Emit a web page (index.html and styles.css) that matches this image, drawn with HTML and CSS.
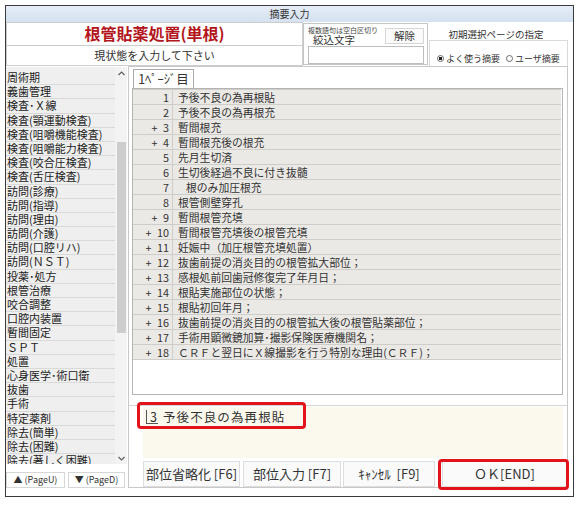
FILE: index.html
```html
<!DOCTYPE html>
<html lang="ja">
<head>
<meta charset="utf-8">
<title>摘要入力</title>
<link rel="stylesheet" href="styles.css">
</head>
<body>
<div class="win">
  <div class="titlebar">摘要入力</div>
  <div class="header">
    <div class="hleft">
      <div class="title">根管貼薬処置(単根)</div>
      <div class="subtitle">現状態を入力して下さい</div>
    </div>
    <div class="filter">
      <div class="frow">
        <div class="flabels">
          <div class="hint">複数語句は空白区切り</div>
          <div class="flabel">絞込文字</div>
        </div>
        <div class="clear">解除</div>
      </div>
      <div class="finput"></div>
    </div>
    <div class="pagesel">
      <div class="ps-title">初期選択ページの指定</div>
      <div class="ps-group">
        <span class="radio on"></span><span class="rlabel">よく使う摘要</span>
        <span class="radio second"></span><span class="rlabel">ユーザ摘要</span>
      </div>
    </div>
  </div>
  <div class="content">
    <div class="side">
      <div class="listbox">
        <div class="list">
          <div class="item">周術期</div>
          <div class="item">義歯管理</div>
          <div class="item">検査･Ｘ線</div>
          <div class="item">検査(顎運動検査)</div>
          <div class="item">検査(咀嚼機能検査)</div>
          <div class="item">検査(咀嚼能力検査)</div>
          <div class="item">検査(咬合圧検査)</div>
          <div class="item">検査(舌圧検査)</div>
          <div class="item">訪問(診療)</div>
          <div class="item">訪問(指導)</div>
          <div class="item">訪問(理由)</div>
          <div class="item">訪問(介護)</div>
          <div class="item">訪問(口腔リハ)</div>
          <div class="item">訪問(ＮＳＴ)</div>
          <div class="item">投薬･処方</div>
          <div class="item">根管治療</div>
          <div class="item">咬合調整</div>
          <div class="item">口腔内装置</div>
          <div class="item">暫間固定</div>
          <div class="item">ＳＰＴ</div>
          <div class="item">処置</div>
          <div class="item">心身医学･術口衛</div>
          <div class="item">抜歯</div>
          <div class="item">手術</div>
          <div class="item">特定薬剤</div>
          <div class="item">除去(簡単)</div>
          <div class="item">除去(困難)</div>
          <div class="item">除去(著しく困難)</div>
        </div>
        <div class="scroll">
          <div class="arrow"><svg width="7" height="5" viewBox="0 0 7 5"><polyline points="0.5,4 3.5,1 6.5,4" fill="none" stroke="#606060" stroke-width="1.2"/></svg></div>
          <div class="thumb"></div>
          <div class="spacer"></div>
          <div class="arrow"><svg width="7" height="5" viewBox="0 0 7 5"><polyline points="0.5,1 3.5,4 6.5,1" fill="none" stroke="#606060" stroke-width="1.2"/></svg></div>
        </div>
      </div>
      <div class="pagebtns">
        <div class="pbtn pbtn-up">▲ (PageU)</div>
        <div class="pbtn pbtn-down">▼ (PageD)</div>
      </div>
    </div>
    <div class="main">
      <div class="tabs"><div class="tab">1ﾍﾟｰｼﾞ目</div></div>
      <div class="tabpage">
        <div class="grid">
          <div class="row"><div class="num">1</div><div class="txt">予後不良の為再根貼</div></div>
          <div class="row"><div class="num">2</div><div class="txt">予後不良の為再根充</div></div>
          <div class="row"><div class="num">+ 3</div><div class="txt">暫間根充</div></div>
          <div class="row"><div class="num">+ 4</div><div class="txt">暫間根充後の根充</div></div>
          <div class="row"><div class="num">5</div><div class="txt">先月生切済</div></div>
          <div class="row"><div class="num">6</div><div class="txt">生切後経過不良に付き抜髄</div></div>
          <div class="row"><div class="num">7</div><div class="txt indent">根のみ加圧根充</div></div>
          <div class="row"><div class="num">8</div><div class="txt">根管側壁穿孔</div></div>
          <div class="row"><div class="num">+ 9</div><div class="txt">暫間根管充填</div></div>
          <div class="row"><div class="num">+ 10</div><div class="txt">暫間根管充填後の根管充填</div></div>
          <div class="row"><div class="num">+ 11</div><div class="txt">妊娠中（加圧根管充填処置）</div></div>
          <div class="row"><div class="num">+ 12</div><div class="txt">抜歯前提の消炎目的の根管拡大部位；</div></div>
          <div class="row"><div class="num">+ 13</div><div class="txt">感根処前回歯冠修復完了年月日；</div></div>
          <div class="row"><div class="num">+ 14</div><div class="txt">根貼実施部位の状態；</div></div>
          <div class="row"><div class="num">+ 15</div><div class="txt">根貼初回年月；</div></div>
          <div class="row"><div class="num">+ 16</div><div class="txt">抜歯前提の消炎目的の根管拡大後の根管貼薬部位；</div></div>
          <div class="row"><div class="num">+ 17</div><div class="txt">手術用顕微鏡加算･撮影保険医療機関名；</div></div>
          <div class="row"><div class="num">+ 18</div><div class="txt">ＣＲＦと翌日にＸ線撮影を行う特別な理由(ＣＲＦ)；</div></div>
        </div>
      </div>
      <div class="sep"></div>
      <div class="memo">
        <div class="memo-text"><span class="caret">3</span><span class="memo-body">予後不良の為再根貼</span></div>
      </div>
      <div class="btns">
        <div class="btn btn-f6">部位省略化 [F6]</div>
        <div class="btn btn-f7">部位入力 [F7]</div>
        <div class="btn btn-f9">ｷｬﾝｾﾙ  [F9]</div>
        <div class="btn btn-ok">ＯＫ[END]</div>
      </div>
      <div class="hl hl-memo"></div>
      <div class="hl hl-ok"></div>
    </div>
  </div>
</div>
</body>
</html>
```

FILE: styles.css
```css
* { box-sizing: border-box; }
html, body { margin: 0; padding: 0; background: #fff; }
body {
  font-family: "Noto Sans CJK JP", "Noto Sans", sans-serif;
  color: #2b2b2b;
}
.win {
  margin: 5px 0 0 5px;
  width: 569px;
  height: 492px;
  border: 1px solid #3a3a3a;
  display: flex;
  flex-direction: column;
  background: #fff;
}
.titlebar {
  flex: none;
  height: 16px;
  line-height: 16px;
  font-size: 10px;
  text-align: center;
  color: #333;
  background: linear-gradient(#e5edf8, #d5e1f0);
}
.header { flex: none; height: 44px; display: flex; }
.hleft { width: 297px; display: flex; flex-direction: column; }
.title {
  height: 24px;
  border: 1px solid #cdcdcd;
  text-align: center;
  font-size: 16px;
  font-weight: bold;
  color: #b3161c;
  line-height: 20px;
}
.subtitle {
  height: 20px;
  border: 1px solid #cdcdcd;
  border-top: none;
  text-align: center;
  font-size: 11px;
  line-height: 19px;
  color: #333;
}
.filter {
  width: 125px;
  margin: 1px 0;
  border: 1px solid #c6c6c6;
  padding: 2px 2px 0 4px;
  display: flex;
  flex-direction: column;
}
.frow { display: flex; height: 20px; }
.flabels { flex: 1; }
.hint { font-size: 7px; line-height: 8px; color: #444; white-space: nowrap; }
.flabel { font-size: 10.5px; line-height: 11px; padding-left: 5px; color: #333; }
.clear {
  width: 39px;
  height: 16px;
  margin: 2px 1px 0 0;
  border: 1px solid #d6d6d6;
  background: #fbfbfb;
  font-size: 10.5px;
  line-height: 14px;
  text-align: center;
  color: #333;
}
.finput { height: 18px; margin-right: 1px; border: 1px solid #bdbdbd; background: #fff; }
.pagesel { flex: 1; display: flex; flex-direction: column; }
.ps-title {
  margin-top: 6px;
  font-size: 9.5px;
  line-height: 12px;
  text-align: center;
  padding-right: 9px;
  color: #333;
}
.ps-group {
  flex: 1;
  margin: 0 5px 0 1px;
  border: 1px solid #dadada;
  border-bottom: none;
  padding: 10px 0 0 7px;
  display: flex;
  align-items: center;
  font-size: 9px;
  line-height: 12px;
  color: #333;
}
.radio {
  display: inline-block;
  width: 7px;
  height: 7px;
  border: 1px solid #6a6a6a;
  border-radius: 50%;
  background: #fff;
  margin-right: 2px;
}
.radio.on { background: radial-gradient(circle, #222 0, #222 1.5px, #fff 2px); }
.radio.second { margin-left: 6px; }
.content { flex: 1; display: flex; }
.side { width: 122px; display: flex; flex-direction: column; }
.listbox { margin-top: 1px; height: 397px; display: flex; overflow: hidden; }
.list { flex: 1; background: #efefef; padding-top: 4px; }
.item {
  height: 14.2px;
  border-bottom: 1px solid #d9d9d9;
  font-size: 11px;
  line-height: 13px;
  padding-left: 1px;
  white-space: nowrap;
  color: #222;
}
.scroll {
  width: 12px;
  margin-right: 1px;
  background: #f3f3f3;
  display: flex;
  flex-direction: column;
  align-items: center;
}
.arrow { width: 12px; height: 12px; display: flex; align-items: center; justify-content: center; }
.thumb { width: 9px; height: 191px; margin-top: 63px; background: #cdcdcd; }
.spacer { flex: 1; }
.pagebtns { margin-top: 8px; display: flex; gap: 3px; }
.pbtn {
  height: 16px;
  border: 1px solid #d6d6d6;
  background: #fff;
  font-size: 9px;
  line-height: 14px;
  text-align: center;
  color: #333;
  white-space: nowrap;
}
.pbtn-up { width: 59px; }
.pbtn-down { width: 57px; }
.main {
  position: relative;
  width: 440px;
  height: 422px;
  margin-right: 5px;
  border: 1px solid #c8c8c8;
  padding-left: 3px;
  display: flex;
  flex-direction: column;
}
.tabs { height: 21px; padding-left: 1px; display: flex; align-items: flex-end; }
.tab {
  width: 61px;
  height: 19px;
  border: 1px solid #a9a9a9;
  border-bottom: none;
  background: #fff;
  font-size: 12.5px;
  line-height: 18px;
  text-align: center;
  color: #333;
  white-space: nowrap;
}
.tabpage { width: 431px; height: 307px; border: 1px solid #b4b4b4; background: #fff; }
.grid { width: 428px; border-top: 1px solid #cfcdc9; background: #ebe9e6; }
.row {
  display: flex;
  height: 15px;
  border-bottom: 1px solid #cfcdc9;
  font-size: 10.8px;
  line-height: 14px;
  color: #333;
}
.num {
  width: 40px;
  flex: none;
  border-right: 1px solid #cfcdc9;
  text-align: right;
  padding-right: 3px;
  white-space: pre;
  word-spacing: 3px;
}
.txt { padding-left: 5px; white-space: nowrap; }
.txt.indent { padding-left: 13px; }
.sep { height: 1px; margin: 10px 0 0 -3px; background: #d4d4d4; }
.memo { height: 51px; margin: 1px 4px 0 11px; background: #fbf9ee; }
.memo-text {
  padding: 2px 0 0 3px;
  font-size: 12.5px;
  line-height: 15px;
  color: #333;
  white-space: nowrap;
}
.caret {
  display: inline-block;
  line-height: 13px;
  padding-left: 3px;
  padding-right: 1px;
  border-left: 1px solid #555;
  border-bottom: 1px solid #555;
}
.memo-body { margin-left: 5px; letter-spacing: 1.1px; }
.btns { display: flex; height: 26px; margin-top: 3px; padding-left: 11px; }
.btn {
  height: 26px;
  border: 1px solid #dedede;
  background: #fafafa;
  font-size: 13px;
  line-height: 24px;
  text-align: center;
  color: #333;
  white-space: pre;
}
.btn-f6 { width: 97px; }
.btn-f7 { width: 98px; margin-left: 3px; }
.btn-f9 { width: 92px; margin-left: 2px; }
.btn-ok { width: 125px; margin-left: 7px; }
.hl {
  position: absolute;
  border: 3px solid #e3131b;
  border-radius: 4px;
}
.hl-memo { left: 8px; top: 335px; width: 169px; height: 27px; }
.hl-ok { left: 309px; top: 392px; width: 131px; height: 31px; }
```
